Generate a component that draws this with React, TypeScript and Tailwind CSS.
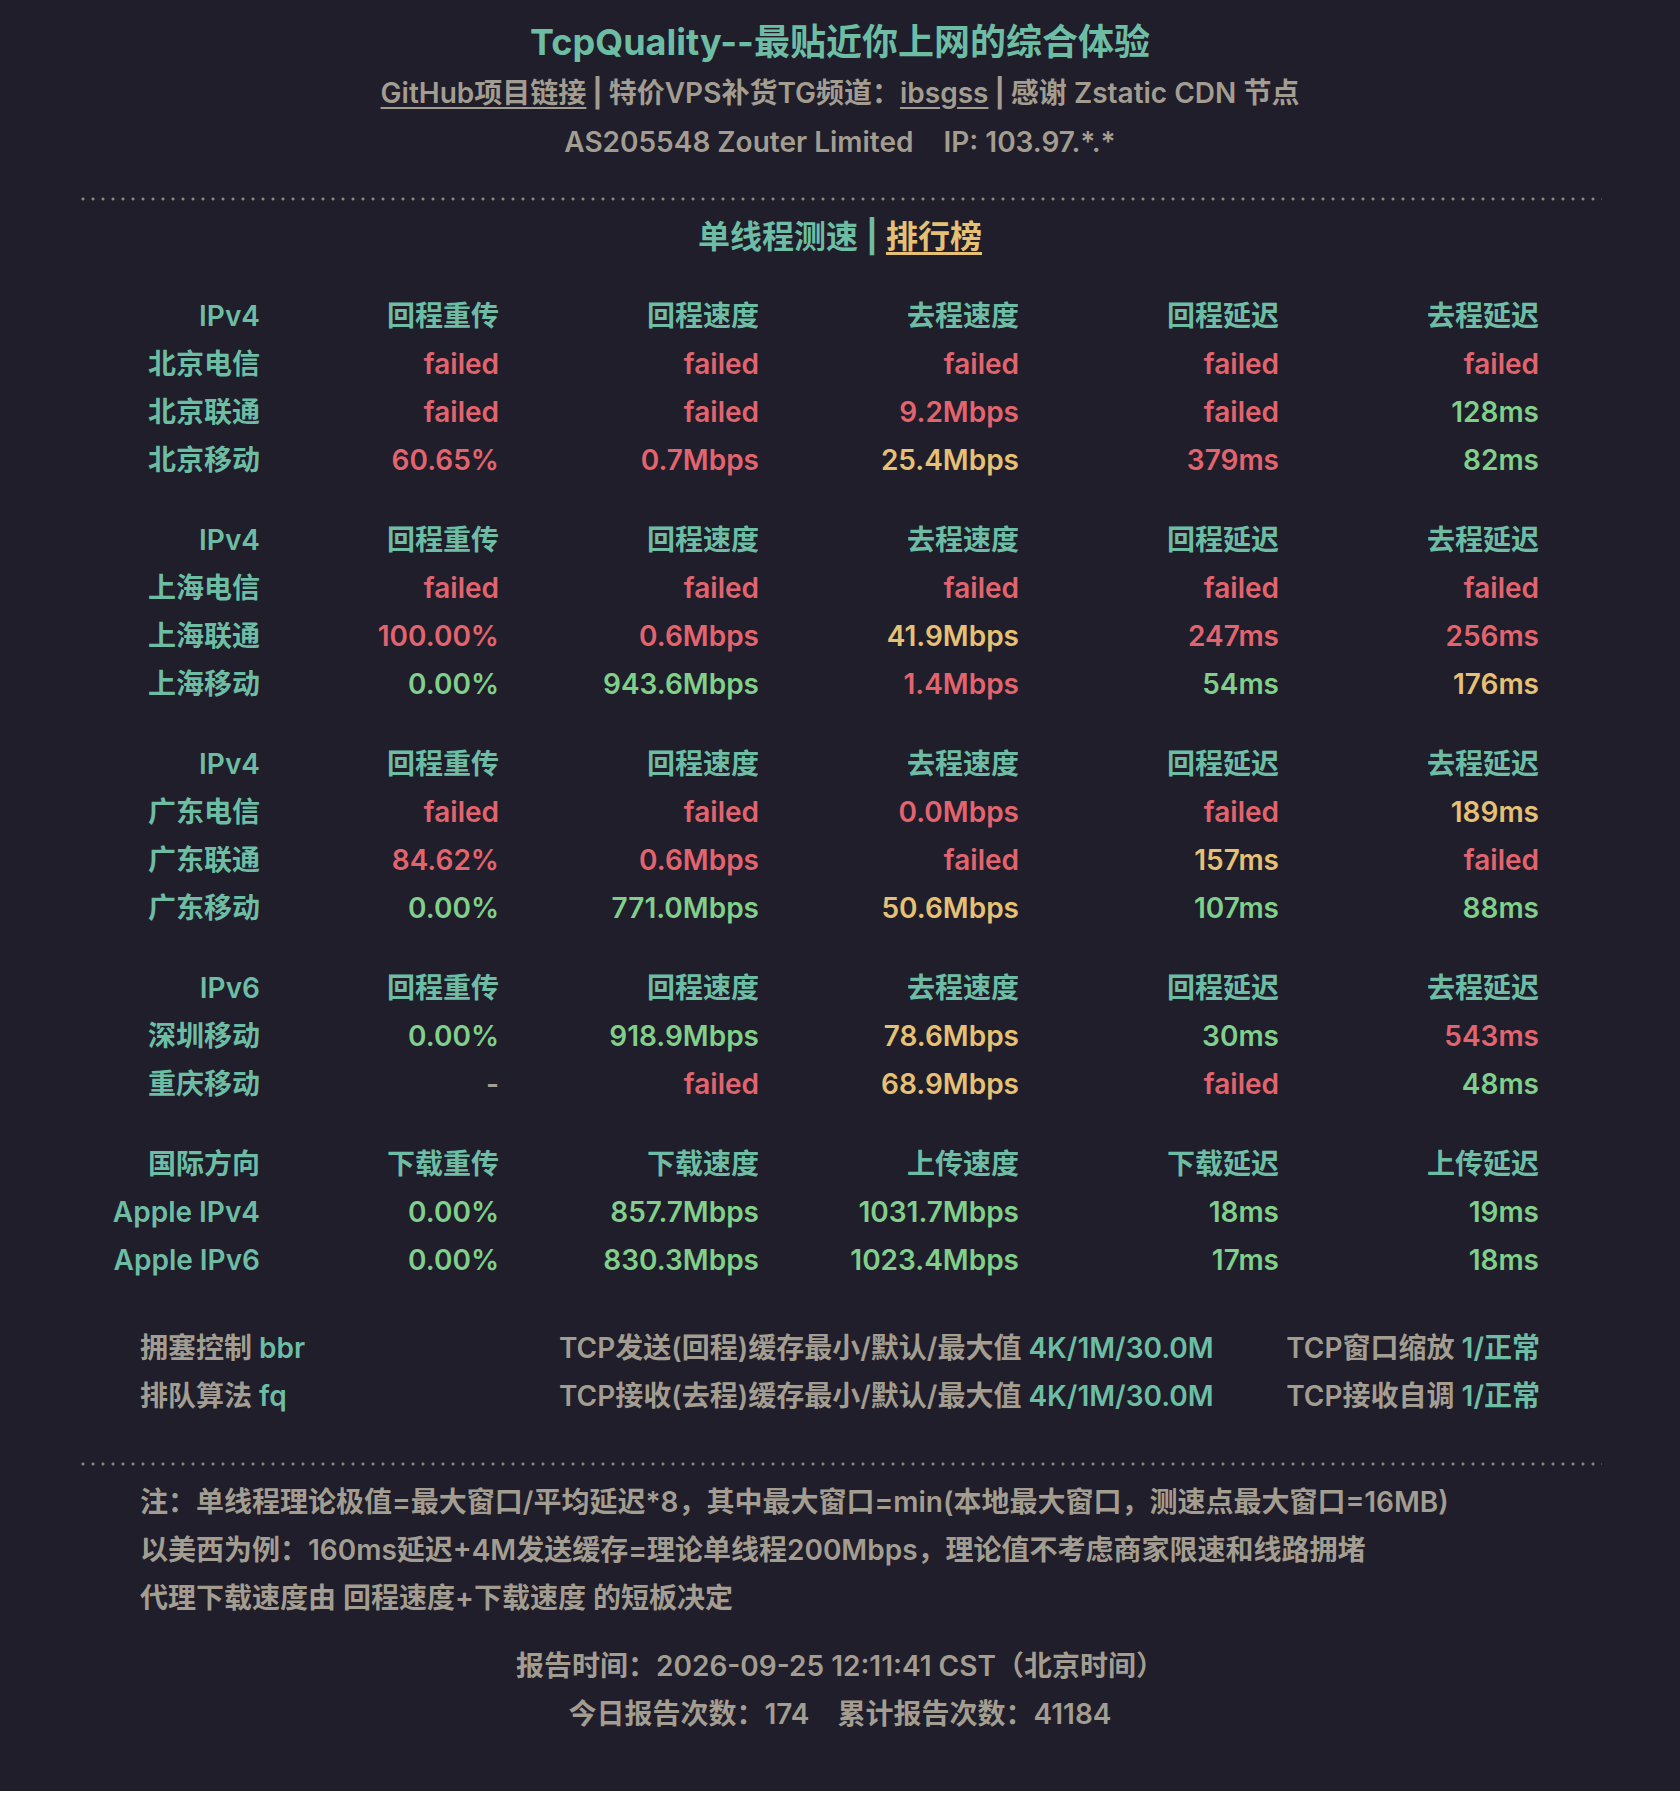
const teal = "text-[#6dbda5]";
const red = "text-[#e2646f]";
const yellow = "text-[#e6c175]";
const green = "text-[#80cf8a]";
const gray = "text-[#a39d91]";

type Cell = [string, string];

const R = (v: string): Cell => [v, red];
const Y = (v: string): Cell => [v, yellow];
const G = (v: string): Cell => [v, green];
const N = (v: string): Cell => [v, gray];

const groups: { head: string[]; rows: { name: string; cells: Cell[] }[] }[] = [
  {
    head: ["IPv4", "回程重传", "回程速度", "去程速度", "回程延迟", "去程延迟"],
    rows: [
      { name: "北京电信", cells: [R("failed"), R("failed"), R("failed"), R("failed"), R("failed")] },
      { name: "北京联通", cells: [R("failed"), R("failed"), R("9.2Mbps"), R("failed"), G("128ms")] },
      { name: "北京移动", cells: [R("60.65%"), R("0.7Mbps"), Y("25.4Mbps"), R("379ms"), G("82ms")] },
    ],
  },
  {
    head: ["IPv4", "回程重传", "回程速度", "去程速度", "回程延迟", "去程延迟"],
    rows: [
      { name: "上海电信", cells: [R("failed"), R("failed"), R("failed"), R("failed"), R("failed")] },
      { name: "上海联通", cells: [R("100.00%"), R("0.6Mbps"), Y("41.9Mbps"), R("247ms"), R("256ms")] },
      { name: "上海移动", cells: [G("0.00%"), G("943.6Mbps"), R("1.4Mbps"), G("54ms"), Y("176ms")] },
    ],
  },
  {
    head: ["IPv4", "回程重传", "回程速度", "去程速度", "回程延迟", "去程延迟"],
    rows: [
      { name: "广东电信", cells: [R("failed"), R("failed"), R("0.0Mbps"), R("failed"), Y("189ms")] },
      { name: "广东联通", cells: [R("84.62%"), R("0.6Mbps"), R("failed"), Y("157ms"), R("failed")] },
      { name: "广东移动", cells: [G("0.00%"), G("771.0Mbps"), Y("50.6Mbps"), G("107ms"), G("88ms")] },
    ],
  },
  {
    head: ["IPv6", "回程重传", "回程速度", "去程速度", "回程延迟", "去程延迟"],
    rows: [
      { name: "深圳移动", cells: [G("0.00%"), G("918.9Mbps"), Y("78.6Mbps"), G("30ms"), R("543ms")] },
      { name: "重庆移动", cells: [N("-"), R("failed"), Y("68.9Mbps"), R("failed"), G("48ms")] },
    ],
  },
  {
    head: ["国际方向", "下载重传", "下载速度", "上传速度", "下载延迟", "上传延迟"],
    rows: [
      { name: "Apple IPv4", cells: [G("0.00%"), G("857.7Mbps"), G("1031.7Mbps"), G("18ms"), G("19ms")] },
      { name: "Apple IPv6", cells: [G("0.00%"), G("830.3Mbps"), G("1023.4Mbps"), G("17ms"), G("18ms")] },
    ],
  },
];

const Dots = () => (
  <div className="mx-[78px] h-[4px] bg-[radial-gradient(circle,#8c877c_1.4px,transparent_1.7px)] bg-[length:10px_4px]" />
);

export default function App() {
  return (
    <div
      className="bg-[#1f1e2a] pt-[15px] pb-[53px] font-semibold"
      style={{ fontFamily: 'Inter, "Noto Sans CJK SC", sans-serif' }}
    >
      <h1 className={`text-center text-[36px] leading-[54px] font-bold ${teal}`}>
        TcpQuality--最贴近你上网的综合体验
      </h1>
      <p className={`text-center text-[28px] leading-[48px] ${gray}`}>
        <a className="underline underline-offset-4">GitHub项目链接</a>
        <span className="mx-[6px] font-bold">|</span>
        特价VPS补货TG频道：<a className="underline underline-offset-4">ibsgss</a>
        <span className="mx-[6px] font-bold">|</span>
        感谢 Zstatic CDN 节点
      </p>
      <p className={`mt-px text-center text-[28px] leading-[48px] ${gray}`}>
        AS205548 Zouter Limited<span className="ml-[30px]">IP: 103.97.*.*</span>
      </p>

      <div className="mt-[31px]">
        <Dots />
      </div>

      <p className={`mt-[12px] text-center text-[32px] leading-[48px] ${teal}`}>
        单线程测速 <span className="font-bold">|</span>{" "}
        <a className={`underline underline-offset-4 ${yellow}`}>排行榜</a>
      </p>

      <div className="mt-[31px] flex flex-col gap-[32px] pl-[80px]">
        {groups.map((g, gi) => (
          <div key={gi} className="grid grid-cols-[180px_239px_260px_260px_260px_260px] text-[28px] leading-[48px]">
            {g.head.map((h, i) => (
              <div key={i} className={`text-right ${teal}`}>
                {h}
              </div>
            ))}
            {g.rows.map((r) => (
              <div key={r.name} className="contents">
                <div className={`text-right whitespace-nowrap ${teal}`}>{r.name}</div>
                {r.cells.map(([v, c], i) => (
                  <div key={i} className={`text-right ${c}`}>
                    {v}
                  </div>
                ))}
              </div>
            ))}
          </div>
        ))}
      </div>

      <div className={`mt-[40px] flex px-[140px] text-[28px] leading-[48px] ${gray}`}>
        <div className="w-[420px]">
          <div>
            拥塞控制 <span className={teal}>bbr</span>
          </div>
          <div>
            排队算法 <span className={teal}>fq</span>
          </div>
        </div>
        <div className="w-[729px]">
          <div>
            TCP发送(回程)缓存最小/默认/最大值 <span className={teal}>4K/1M/30.0M</span>
          </div>
          <div>
            TCP接收(去程)缓存最小/默认/最大值 <span className={teal}>4K/1M/30.0M</span>
          </div>
        </div>
        <div className="flex-1 text-right whitespace-nowrap">
          <div>
            TCP窗口缩放 <span className={teal}>1/正常</span>
          </div>
          <div>
            TCP接收自调 <span className={teal}>1/正常</span>
          </div>
        </div>
      </div>

      <div className="mt-[42px]">
        <Dots />
      </div>

      <div className={`mt-[12px] px-[140px] text-[28px] leading-[48px] ${gray}`}>
        <p>注：单线程理论极值=最大窗口/平均延迟*8，其中最大窗口=min(本地最大窗口，测速点最大窗口=16MB)</p>
        <p>以美西为例：160ms延迟+4M发送缓存=理论单线程200Mbps，理论值不考虑商家限速和线路拥堵</p>
        <p>代理下载速度由 回程速度+下载速度 的短板决定</p>
      </div>

      <div className={`mt-[20px] text-center text-[28px] leading-[48px] ${gray}`}>
        <p>报告时间：2026-09-25 12:11:41 CST（北京时间）</p>
        <p>
          今日报告次数：174<span className="ml-[28px]">累计报告次数：41184</span>
        </p>
      </div>
    </div>
  );
}
